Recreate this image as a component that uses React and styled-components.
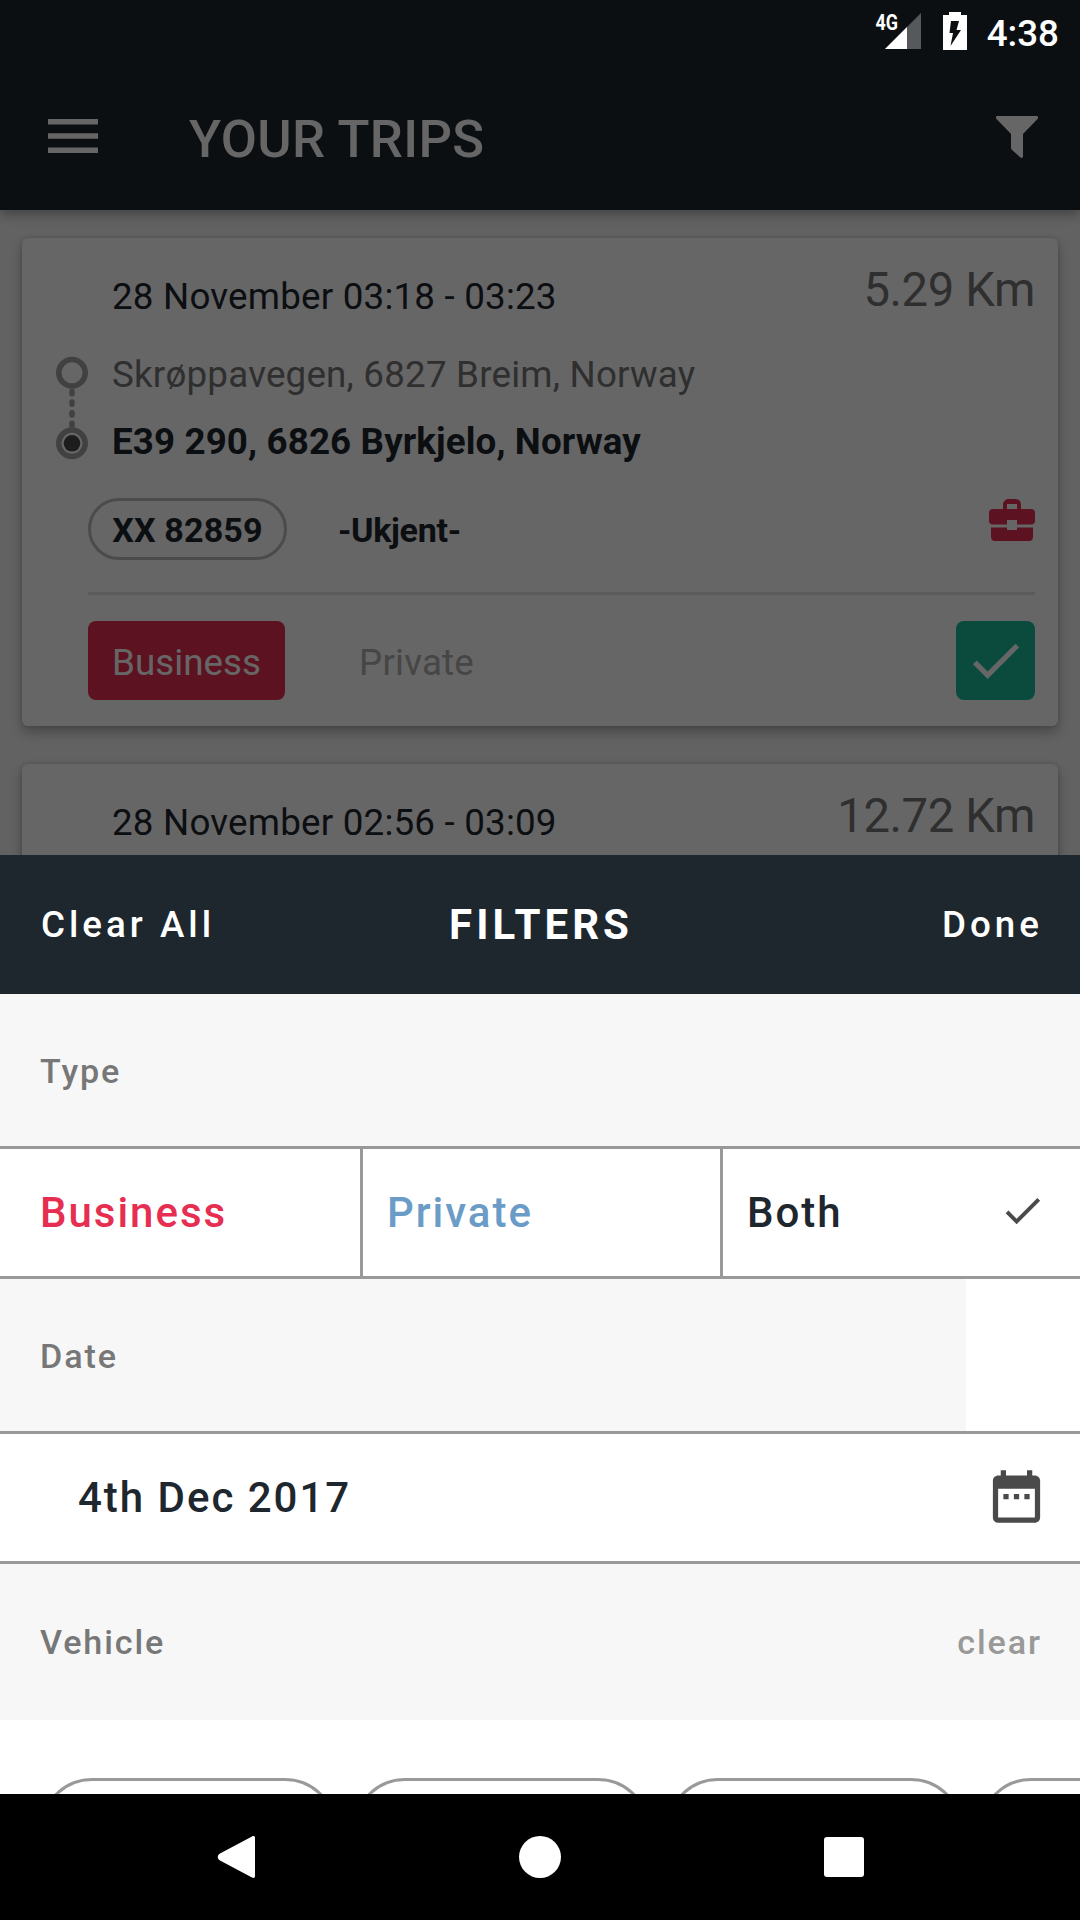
import React from 'react';
import styled, { createGlobalStyle } from 'styled-components';
import { MdCheck, MdDateRange } from 'react-icons/md';

const GlobalStyle = createGlobalStyle`
  :root {
    --navy: #1e262e;
    --crimson: #e62e51;
    --teal: #1abc9c;
    --blue: #6a9cc7;
    --dark-gray: #777777;
    --gray: #999999;
    --light-gray: #f7f7f7;
  }

  * {
    box-sizing: border-box;
  }

  body {
    margin: 0;
    font-family: Roboto, 'Liberation Sans', sans-serif;
    color: var(--navy);
  }

  svg {
    display: block;
    flex: none;
  }
`;

const Screen = styled.div`
  width: 1080px;
  height: 1920px;
  position: relative;
  overflow: hidden;
  display: flex;
  flex-direction: column;
  background-color: #f5f5f5;
`;

const Backdrop = styled.div`
  position: absolute;
  inset: 0;
  background-color: rgba(0, 0, 0, 0.6);
`;

const StatusBar = styled.div`
  position: absolute;
  top: 0;
  right: 21px;
  height: 63px;
  display: flex;
  align-items: flex-start;
  color: white;

  .status-bar__signal {
    margin: 4px 22px 0 0;
  }

  .status-bar__battery {
    margin: 12px 20px 0 0;
  }

  .status-bar__time {
    font-size: 36.75px;
    font-weight: 500;
    line-height: 67px;
  }
`;

const AppBar = styled.header`
  flex: none;
  height: 210px;
  padding: 63px 42px 0 48px;
  display: flex;
  align-items: center;
  background-color: var(--navy);
  color: white;
  box-shadow: 0 4px 12px rgba(0, 0, 0, 0.35);
  z-index: 0;

  .app-bar__title {
    flex: 1;
    margin: 4px 0 0 91px;
    font-size: 52.5px;
    font-weight: 500;
    line-height: 62px;
    letter-spacing: 0.35px;
  }
`;

const TripList = styled.main`
  padding: 28px 22px;
  display: flex;
  flex-direction: column;
  gap: 38px;
`;

const Card = styled.article`
  flex: none;
  height: 488px;
  padding: 0 23px 0 33px;
  border-radius: 6px;
  background-color: white;
  box-shadow: 0 6px 13px rgba(0, 0, 0, 0.28), 0 0 5px rgba(0, 0, 0, 0.14);
`;

const CardHead = styled.div`
  height: 108px;
  padding: 28px 0 0 57px;
  display: flex;
  justify-content: space-between;

  .card-head__date {
    margin-top: 9px;
    font-size: 36.75px;
    line-height: 44px;
    letter-spacing: 0.2px;
  }

  .card-head__distance {
    font-size: 47.25px;
    line-height: 48px;
    letter-spacing: -0.4px;
    color: var(--dark-gray);
  }
`;

const Route = styled.div`
  display: flex;
  gap: 23px;

  .route__line {
    margin-top: 9px;
  }

  .route__stops {
    display: flex;
    flex-direction: column;
    gap: 23px;
    padding-top: 7px;
  }
`;

const Stop = styled.p`
  margin: 0;
  font-size: 36.75px;
  line-height: 44px;
  letter-spacing: ${({ $end }) => ($end ? '0.12px' : '0.2px')};
  font-weight: ${({ $end }) => ($end ? 700 : 400)};
  color: ${({ $end }) => ($end ? 'var(--navy)' : 'var(--dark-gray)')};
`;

const VehicleRow = styled.div`
  height: 97px;
  margin: 34px 0 0 33px;
  display: flex;
  align-items: flex-start;
  font-size: 34.125px;
  font-weight: 700;
  border-bottom: 3px solid #e4e4e4;

  .vehicle-row__plate {
    width: 199px;
    height: 62px;
    line-height: 58px;
    text-align: center;
    letter-spacing: 0.1px;
    border: 3px solid #bbbbbb;
    border-radius: 31px;
  }

  .vehicle-row__driver {
    flex: 1;
    margin-left: 51px;
    line-height: 64px;
    letter-spacing: -0.35px;
  }

  .vehicle-row__icon {
    margin-top: 1px;
  }
`;

const Actions = styled.div`
  margin: 26px 0 0 33px;
  display: flex;
  font-size: 36.75px;
  line-height: 83px;

  .actions__private {
    flex: 1;
    margin-left: 74px;
    letter-spacing: 0.2px;
    color: #b0b0b0;
  }
`;

const ActionButton = styled.button`
  width: ${({ $width }) => $width};
  height: 79px;
  padding: 0;
  border: 0;
  border-radius: 8px;
  display: flex;
  justify-content: center;
  align-items: center;
  font: inherit;
  color: white;
  background-color: ${({ $color }) => $color};

  span {
    padding-top: 3px;
  }
`;

const Sheet = styled.section`
  position: absolute;
  top: 855px;
  left: 0;
  right: 0;
  height: 939px;
  overflow: hidden;
  background-color: white;
`;

const SheetHead = styled.div`
  height: 139px;
  padding: 0 37px 0 41px;
  display: grid;
  grid-template-columns: 1fr auto 1fr;
  align-items: center;
  background-color: var(--navy);
  color: white;
  font-size: 36.75px;
  font-weight: 500;
  letter-spacing: 4px;

  .sheet-head__title {
    margin-right: 2px;
    font-size: 42px;
    font-weight: 700;
  }

  .sheet-head__done {
    justify-self: end;
  }
`;

const SectionTitle = styled.div`
  width: ${({ $width }) => $width || '100%'};
  height: ${({ $last }) => ($last ? '156px' : '152px')};
  padding: 1px 38px ${({ $last }) => ($last ? '1px' : 0)} 40px;
  display: flex;
  justify-content: space-between;
  align-items: center;
  background-color: var(--light-gray);
  color: var(--dark-gray);
  font-size: 34.125px;
  font-weight: 500;
  letter-spacing: 1.9px;

  .section-title__clear {
    color: var(--gray);
  }
`;

const OptionRow = styled.div`
  height: 133px;
  display: flex;
  border: solid var(--gray);
  border-width: 3px 0;
`;

const Option = styled.div`
  width: ${({ $width }) => $width};
  padding: 0 ${({ $end }) => $end || '34px'} 0 ${({ $inset }) => $inset};
  display: flex;
  justify-content: space-between;
  align-items: center;
  color: ${({ $color }) => $color || 'var(--navy)'};
  font-size: 42px;
  font-weight: 500;
  letter-spacing: 1.98px;

  & + & {
    border-left: 3px solid var(--gray);
  }

  svg {
    margin-bottom: ${({ $end }) => ($end ? '3px' : '5px')};
    color: #4a4a4a;
  }
`;

const VehicleList = styled.div`
  padding: 58px 0 0 40px;
  display: flex;
  gap: 16px;
`;

const VehiclePill = styled.div`
  flex: none;
  width: 297px;
  height: 105px;
  border: 3px solid var(--gray);
  border-radius: 52px;
`;

const NavBar = styled.nav`
  position: absolute;
  bottom: 0;
  width: 100%;
  height: 126px;
  display: flex;
  justify-content: center;
  background-color: black;
`;

const MenuIcon = () => (
  <svg width="50" height="38" viewBox="0 0 50 38" fill="currentColor">
    <path d="M0 1h50v5.600H0zM0 15.200h50v5.600H0zM0 29.500h50v5.600H0z" />
  </svg>
);

const FunnelIcon = () => (
  <svg width="42" height="42" viewBox="0 0 42 42" fill="currentColor">
    <path d="M1 0h40c1 0 1.300.900 1 2.500L27 18v22.500c0 1.500-1.500 1.800-2.500 1L16 34c-.700-.700-1-1.500-1-2.500V18L0 2.500C-.300.900 0 0 1 0z" />
  </svg>
);

const SignalIcon = () => (
  <svg width="50" height="46" viewBox="-4 -8 50 46">
    <path d="M46 1v36H10z" fill="#57585c" />
    <path d="M32 15v22H10z" fill="white" />
    <text
      x="0.500"
      y="17.500"
      fill="white"
      fontFamily="Roboto"
      fontWeight="700"
      fontSize="22.500"
      textLength="22.500"
      lengthAdjust="spacingAndGlyphs"
    >
      4G
    </text>
  </svg>
);

const BatteryIcon = () => (
  <svg width="24" height="38" viewBox="0 0 24 38">
    <path d="M6 0h12v3h6v35H0V3h6z" fill="white" />
    <path d="M8 9h8l-2.500 9H18L7.500 34 10 21H6.500z" fill="#0c0f12" />
  </svg>
);

const RouteIcon = () => (
  <svg width="34" height="105" viewBox="0 0 34 105" fill="none">
    <g stroke="#a3a3a3" strokeWidth="5.500">
      <circle cx="17" cy="17.800" r="13.250" />
      <path d="M17 36.500v34.500" strokeDasharray="2.200 8.400" strokeLinecap="round" />
      <circle cx="17" cy="88.300" r="13.250" />
    </g>
    <circle cx="17" cy="88.300" r="8.300" fill="#4a4a4a" />
  </svg>
);

const BriefcaseIcon = () => (
  <svg width="46" height="42" viewBox="0 0 46 42" fill="#e62e51">
    <path
      fillRule="evenodd"
      d="M14 10V5.500C14 2.500 16.500 0 19.500 0h7C29.500 0 32 2.500 32 5.500V10h10c2.500 0 4 1.500 4 4v8c0 2-1.500 3.500-3.500 3.500H28V21H18v4.500H3.500C1.500 25.500 0 24 0 22v-8c0-2.500 1.500-4 4-4zM18 5v5h10V5z"
    />
    <path d="M2 28.500h16V31h10v-2.500h16V38c0 2.500-1.500 4-4 4H6c-2.500 0-4-1.500-4-4z" />
  </svg>
);

const TripCard = ({ date, distance, children }) => (
  <Card>
    <CardHead>
      <span className="card-head__date">{date}</span>
      <span className="card-head__distance">{distance}</span>
    </CardHead>
    {children}
  </Card>
);

const App = () => {
  const vehicles = [1, 2, 3, 4];

  return (
    <>
      <GlobalStyle />
      <Screen>
        <AppBar>
          <MenuIcon />
          <span className="app-bar__title">YOUR TRIPS</span>
          <FunnelIcon />
        </AppBar>
        <TripList>
          <TripCard date="28 November 03:18 - 03:23" distance="5.29 Km">
            <Route>
              <div className="route__line">
                <RouteIcon />
              </div>
              <div className="route__stops">
                <Stop>Skrøppavegen, 6827 Breim, Norway</Stop>
                <Stop $end>E39 290, 6826 Byrkjelo, Norway</Stop>
              </div>
            </Route>
            <VehicleRow>
              <span className="vehicle-row__plate">XX 82859</span>
              <span className="vehicle-row__driver">-Ukjent-</span>
              <span className="vehicle-row__icon">
                <BriefcaseIcon />
              </span>
            </VehicleRow>
            <Actions>
              <ActionButton $width="197px" $color="var(--crimson)">
                <span>Business</span>
              </ActionButton>
              <span className="actions__private">Private</span>
              <ActionButton $width="79px" $color="var(--teal)">
                <MdCheck size={63} />
              </ActionButton>
            </Actions>
          </TripCard>
          <TripCard date="28 November 02:56 - 03:09" distance="12.72 Km" />
        </TripList>

        <Backdrop />

        <StatusBar>
          <span className="status-bar__signal">
            <SignalIcon />
          </span>
          <span className="status-bar__battery">
            <BatteryIcon />
          </span>
          <span className="status-bar__time">4:38</span>
        </StatusBar>

        <Sheet>
          <SheetHead>
            <span>Clear All</span>
            <span className="sheet-head__title">FILTERS</span>
            <span className="sheet-head__done">Done</span>
          </SheetHead>
          <SectionTitle>Type</SectionTitle>
          <OptionRow>
            <Option $width="360px" $inset="40px" $color="var(--crimson)">
              Business
            </Option>
            <Option $width="360px" $inset="24px" $color="var(--blue)">
              Private
            </Option>
            <Option $width="360px" $inset="24px">
              Both
              <MdCheck size={47} />
            </Option>
          </OptionRow>
          <SectionTitle $width="966px">Date</SectionTitle>
          <OptionRow>
            <Option $width="100%" $inset="78px" $end="32px">
              4th Dec 2017
              <MdDateRange size={63} />
            </Option>
          </OptionRow>
          <SectionTitle $last>
            Vehicle
            <span className="section-title__clear">clear</span>
          </SectionTitle>
          <VehicleList>
            {vehicles.map(id => (
              <VehiclePill key={id} />
            ))}
          </VehicleList>
        </Sheet>

        <NavBar>
          <svg width="700" height="126" viewBox="190 0 700 126" fill="white">
            <path d="M252 42.500c1.500-1 3-.500 3 1.500v38c0 2-1.500 2.500-3 1.500l-32-17c-3-1.800-3-5.200 0-7z" />
            <circle cx="540" cy="63" r="21" />
            <rect x="824" y="43" width="40" height="40" rx="3" />
          </svg>
        </NavBar>
      </Screen>
    </>
  );
};

export default App;
